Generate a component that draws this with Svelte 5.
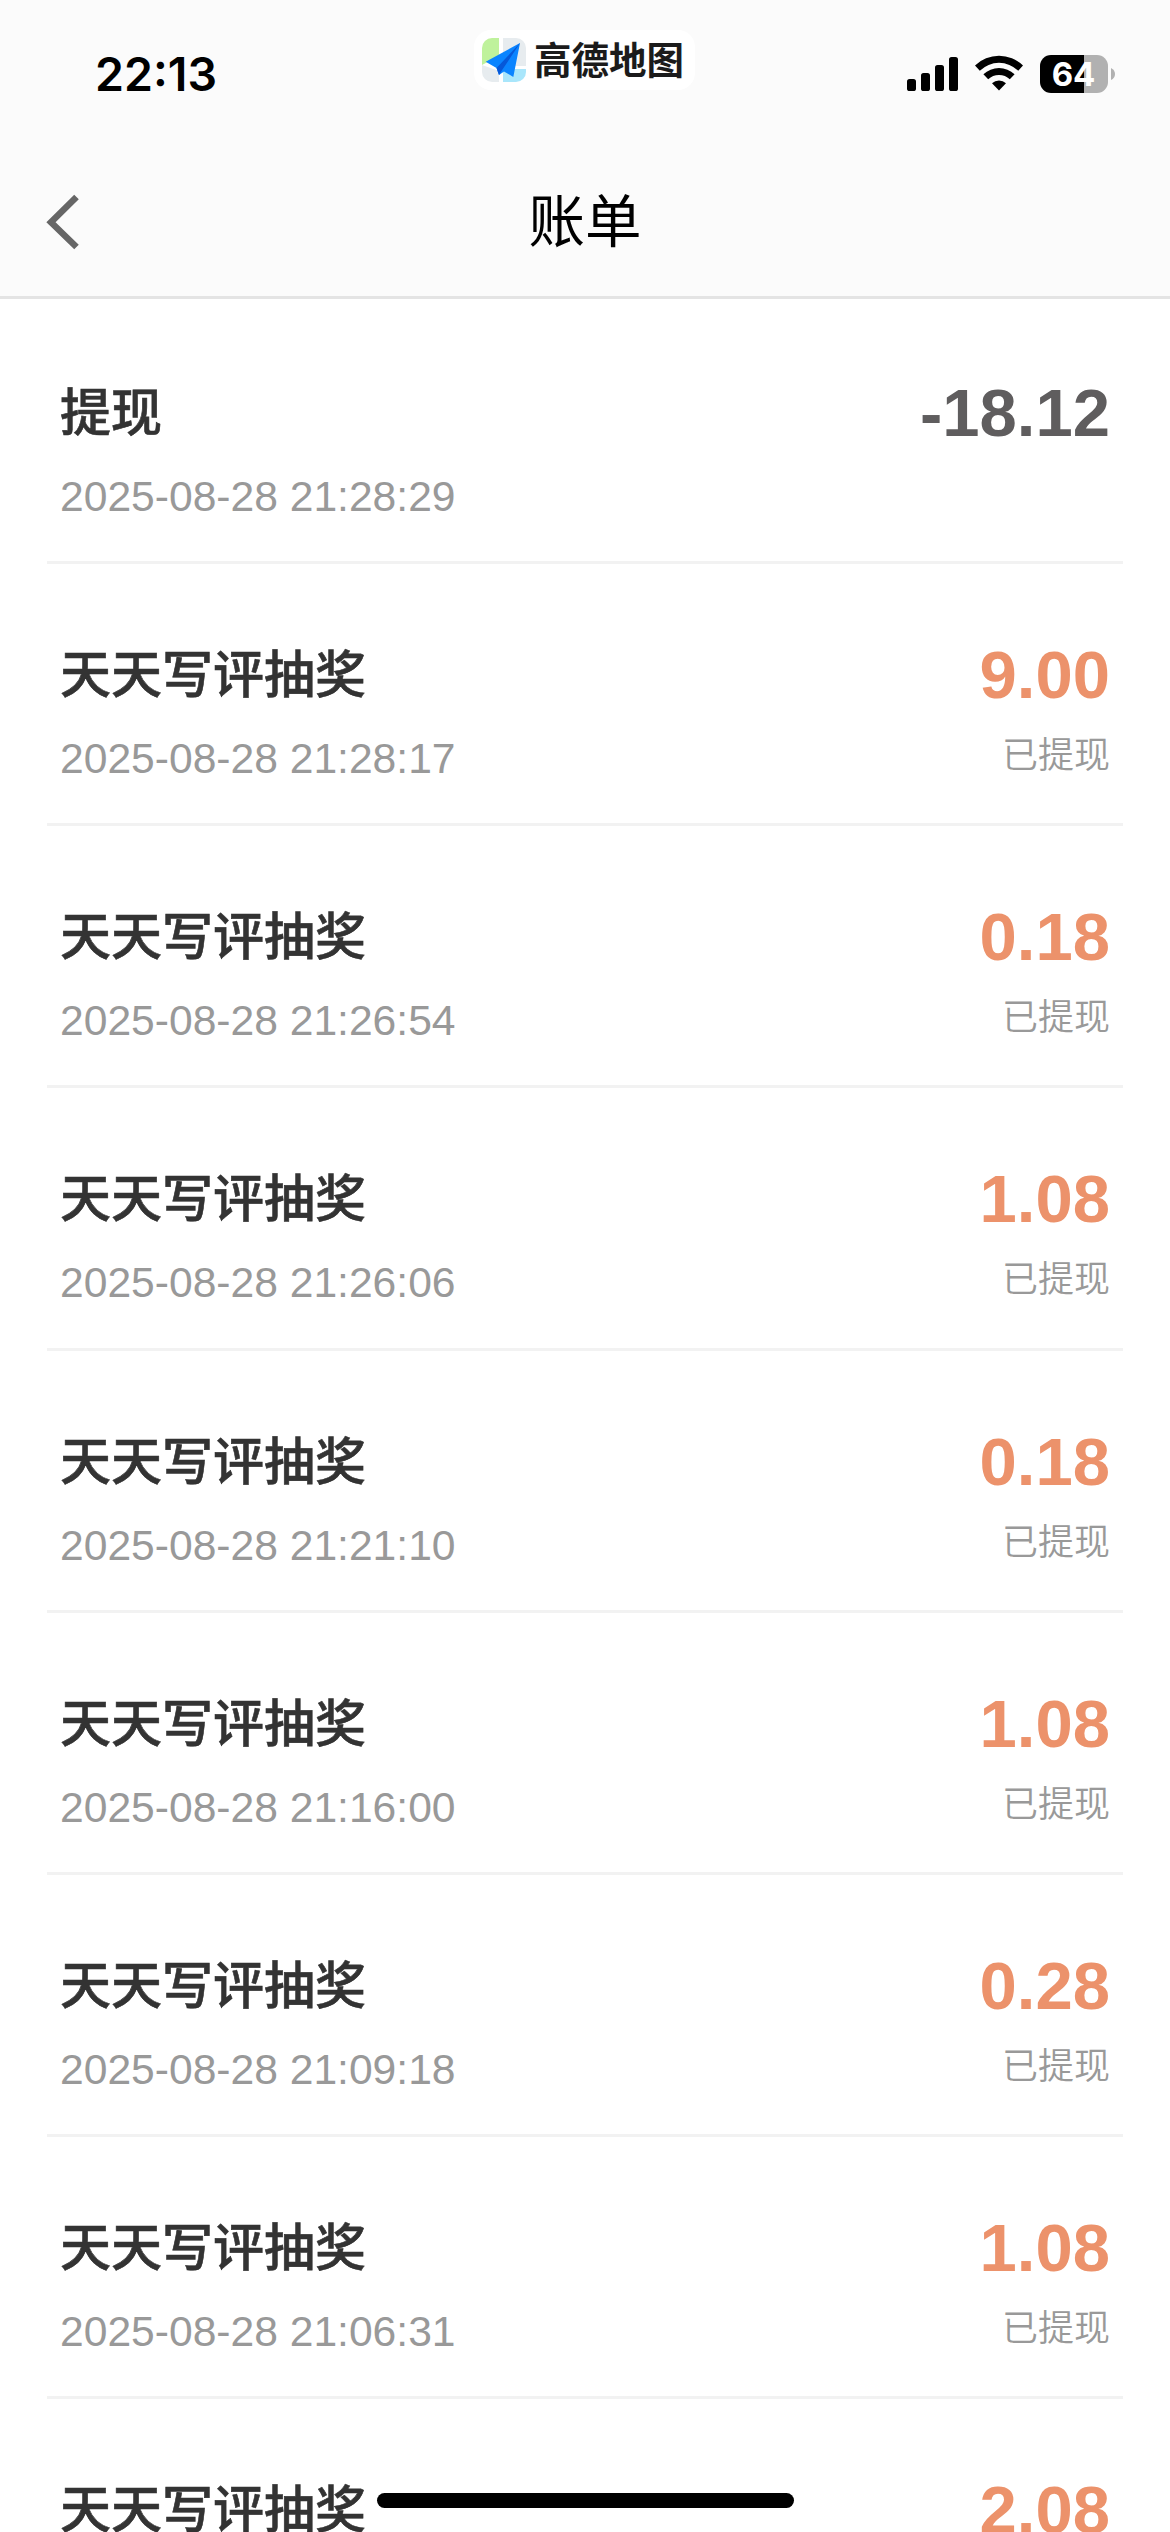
<script>
  const records = [
    { title: "提现", time: "2025-08-28 21:28:29", amount: "-18.12", status: "" },
    { title: "天天写评抽奖", time: "2025-08-28 21:28:17", amount: "9.00", status: "已提现" },
    { title: "天天写评抽奖", time: "2025-08-28 21:26:54", amount: "0.18", status: "已提现" },
    { title: "天天写评抽奖", time: "2025-08-28 21:26:06", amount: "1.08", status: "已提现" },
    { title: "天天写评抽奖", time: "2025-08-28 21:21:10", amount: "0.18", status: "已提现" },
    { title: "天天写评抽奖", time: "2025-08-28 21:16:00", amount: "1.08", status: "已提现" },
    { title: "天天写评抽奖", time: "2025-08-28 21:09:18", amount: "0.28", status: "已提现" },
    { title: "天天写评抽奖", time: "2025-08-28 21:06:31", amount: "1.08", status: "已提现" },
    { title: "天天写评抽奖", time: "", amount: "2.08", status: "" },
  ];
</script>

<div class="screen">
  <header>
    <div class="status-bar">
      <div class="clock">22:13</div>

      <div class="app-pill">
        <svg width="44" height="44" viewBox="0 0 44 44">
          <clipPath id="tile"><rect width="44" height="44" rx="10" /></clipPath>
          <g clip-path="url(#tile)">
            <rect width="44" height="44" fill="#fff" />
            <path d="M0 0H17V18L0 27Z" fill="#bff29c" />
            <path d="M21 0H44V28H21Z" fill="#e7ecef" />
            <path d="M0 27L17 33V44H0Z" fill="#e7ecef" />
            <path d="M21 31H44V44H21Z" fill="#a9e6fb" />
          </g>
          <path d="M38 5L3.7 23.7L14.5 30L17 37L22 33.5L31.3 39Z" fill="#0a84ff" />
          <path d="M38 5L14.5 30L17 37L20 32.3Z" fill="#0658d8" />
        </svg>
        <span>高德地图</span>
      </div>

      <div class="indicators">
        <svg class="signal" width="51" height="34" viewBox="0 0 51 34">
          <rect x="0" y="22" width="9" height="12" rx="2.6" />
          <rect x="14" y="16" width="9" height="18" rx="2.6" />
          <rect x="28" y="8" width="9" height="26" rx="2.6" />
          <rect x="42" y="0" width="9" height="34" rx="2.6" />
        </svg>
        <svg class="wifi" width="48" height="36" viewBox="0 0 48 36">
          <path d="M0 10.5A34.5 34.5 0 0 1 48 10.5L43.2 15.7A27.4 27.4 0 0 0 4.8 15.7Z" />
          <path d="M8.4 19.3A22.5 22.5 0 0 1 39.6 19.3L34.8 24.3A15.4 15.4 0 0 0 13.2 24.3Z" />
          <path d="M17 28.2A10.4 10.4 0 0 1 31 28.2L24 35.6Z" />
        </svg>
        <div class="battery">
          <div class="cell">64</div>
          <svg width="4" height="12" viewBox="0 0 4 12"><path d="M0 0Q4 2 4 6Q4 10 0 12Z" fill="#b1b1b1" /></svg>
        </div>
      </div>
    </div>

    <nav>
      <button type="button" aria-label="返回">
        <svg width="34" height="56" viewBox="0 0 34 56">
          <path d="M30.5 3L5 28.3L30.5 53" fill="none" stroke="#666" stroke-width="6.5" />
        </svg>
      </button>
      <h1>账单</h1>
    </nav>
  </header>

  <ul>
    {#each records as record}
      <li>
        <div class="info">
          <div class="title">{record.title}</div>
          <div class="time">{record.time}</div>
        </div>
        <div class="money">
          <div class="amount" class:out={record.amount.startsWith("-")}>{record.amount}</div>
          <div class="state">{record.status}</div>
        </div>
      </li>
    {/each}
  </ul>

  <div class="home-indicator"></div>
</div>

<style>
  .screen {
    position: relative;
    width: 1170px;
    height: 2532px;
    overflow: hidden;
    background: #fff;
    font-family: "Liberation Sans", "Noto Sans CJK SC", sans-serif;
  }

  header {
    box-sizing: border-box;
    height: 299px;
    background: #fbfbfb;
    border-bottom: 3px solid #e4e4e4;
  }

  .status-bar {
    display: grid;
    grid-template-columns: 474px 221px 1fr;
    height: 148px;
    align-items: start;
  }

  .clock {
    padding: 46px 0 0 95px;
    font: 600 46.5px/56px Inter, sans-serif;
    color: #000;
  }

  .app-pill {
    display: flex;
    align-items: center;
    gap: 8px;
    height: 60px;
    margin-top: 30px;
    padding-left: 8px;
    box-sizing: border-box;
    border-radius: 17px;
    background: #fff;
    font: 700 37.5px/56px "Noto Sans CJK SC", sans-serif;
    color: #1b1b1b;
    white-space: nowrap;
  }

  .app-pill span {
    padding-bottom: 4px;
  }

  .indicators {
    display: flex;
    padding: 55px 0 0 212px;
  }

  .signal {
    margin: 2px 17px 0 0;
  }

  .wifi {
    margin-right: 17px;
  }

  .battery {
    display: flex;
    align-items: center;
    gap: 3px;
  }

  .cell {
    box-sizing: border-box;
    width: 68px;
    height: 38px;
    padding-right: 1px;
    border-radius: 11px;
    background: linear-gradient(90deg, #000 44px, #b1b1b1 44px);
    font: 700 33px/38px Inter, sans-serif;
    text-align: center;
    color: #fff;
  }

  nav {
    display: grid;
    grid-template-columns: 120px 1fr 120px;
    align-items: center;
    height: 148px;
  }

  button {
    display: flex;
    padding: 0 0 0 46px;
    border: 0;
    background: none;
  }

  h1 {
    margin: 0;
    padding-bottom: 11px;
    font: 400 56.5px/80px "Noto Sans CJK SC", sans-serif;
    text-align: center;
    color: #000;
  }

  ul {
    margin: 0;
    padding: 3px 47px 0;
    list-style: none;
  }

  li {
    box-sizing: border-box;
    display: flex;
    justify-content: space-between;
    height: 262.15px;
    padding: 69px 13px 0;
    border-bottom: 3px solid #f2f2f2;
  }

  .title {
    height: 76px;
    font: 500 51px/76px "Noto Sans CJK SC", sans-serif;
    -webkit-text-stroke: 0.6px #333;
    color: #333;
  }

  .time {
    margin-top: 24px;
    font-size: 42.6px;
    line-height: 50px;
    color: #999;
  }

  .amount {
    margin-top: 4px;
    height: 76px;
    font-size: 67px;
    font-weight: 700;
    line-height: 76px;
    color: #ec926b;
  }

  .amount.out {
    color: #5f5d5e;
  }

  .state {
    margin-top: 14px;
    font: 350 36px/50px "Noto Sans CJK SC", sans-serif;
    text-align: right;
    color: #999;
  }

  .home-indicator {
    position: absolute;
    left: 377px;
    bottom: 24px;
    width: 417px;
    height: 15px;
    border-radius: 8px;
    background: #000;
  }
</style>
